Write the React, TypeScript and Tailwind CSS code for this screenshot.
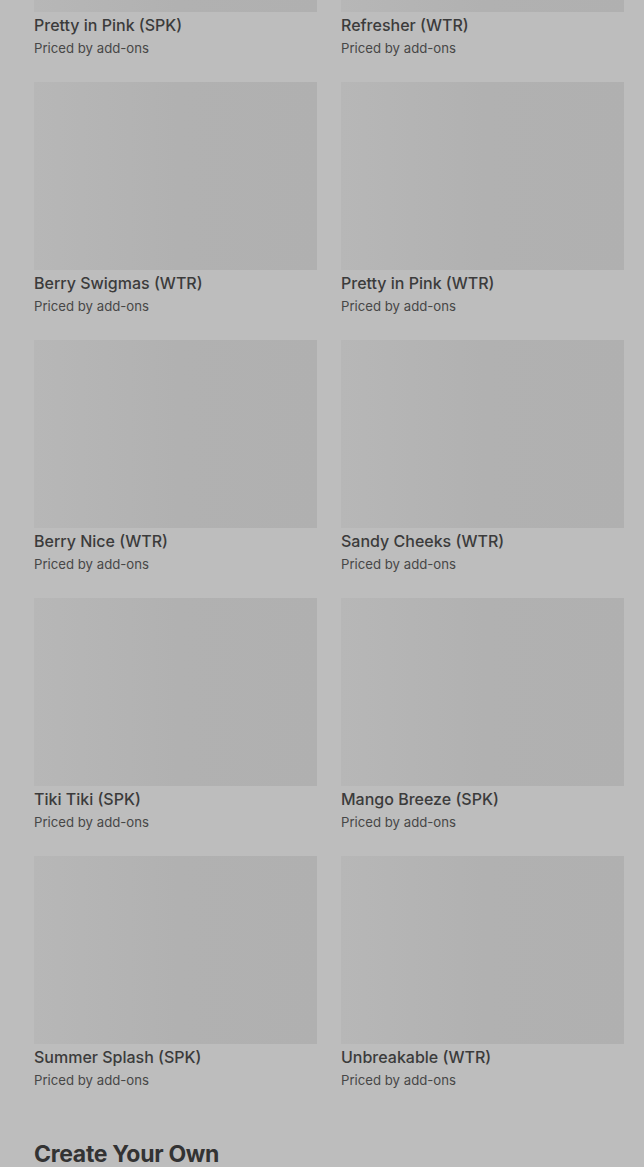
import React from "react";

const items: [string, string][] = [
  ["Pretty in Pink (SPK)", "Refresher (WTR)"],
  ["Berry Swigmas (WTR)", "Pretty in Pink (WTR)"],
  ["Berry Nice (WTR)", "Sandy Cheeks (WTR)"],
  ["Tiki Tiki (SPK)", "Mango Breeze (SPK)"],
  ["Summer Splash (SPK)", "Unbreakable (WTR)"],
];

function Card({ name }: { name: string }) {
  return (
    <div className="flex flex-col">
      <div className="h-[188px] w-full bg-gradient-to-r from-[#b7b7b7] via-[#b1b1b1] to-[#b0b0b0]" />
      <div className="mt-[1px] text-[16px] leading-[24px] font-medium text-[#3b3b3b]">{name}</div>
      <div className="mt-[1px] text-[13.2px] leading-[20px] text-[#474747]">Priced by add-ons</div>
    </div>
  );
}

export default function App() {
  return (
    <div
      className="min-h-[1167px] w-[644px] overflow-hidden bg-[#bdbdbd]"
      style={{ fontFamily: "Inter, 'Noto Sans', sans-serif" }}
    >
      <div className="mt-[-176px] pl-[34px] pr-[20px] flex flex-col gap-[24px]">
        {items.map(([a, b], i) => (
          <div key={i} className="grid grid-cols-2 gap-x-[24px]">
            <Card name={a} />
            <Card name={b} />
          </div>
        ))}
      </div>
      <h2 className="pl-[34px] mt-[48px] text-[23px] leading-[32px] font-bold tracking-[-0.3px] text-[#333333]">
        Create Your Own
      </h2>
    </div>
  );
}
